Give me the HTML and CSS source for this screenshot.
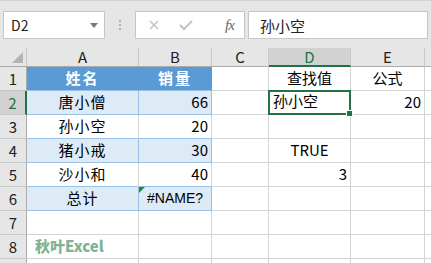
FILE: index.html
```html
<!DOCTYPE html>
<html lang="zh-CN">
<head>
<meta charset="UTF-8">
<title>查找值</title>
<link rel="stylesheet" href="styles.css">
</head>
<body>

<!-- Formula bar -->
<div class="formula-bar">
  <div class="name-box">
    <span>D2</span>
    <span class="caret"></span>
  </div>
  <div class="grip"><i></i><i></i><i></i></div>
  <div class="fx-buttons">
    <svg class="btn-icon" width="14" height="14" viewBox="0 0 14 14"><path d="M3 3 L11 11 M11 3 L3 11" stroke="#c4c4c4" stroke-width="1.6" fill="none"/></svg>
    <svg class="btn-icon" width="16" height="14" viewBox="0 0 16 14"><path d="M2 7 L6 11 L14 3" stroke="#c4c4c4" stroke-width="2" fill="none"/></svg>
    <span class="fx">fx</span>
  </div>
  <div class="formula-input">孙小空</div>
</div>

<!-- Sheet -->
<div class="sheet">
  <div class="corner"><span class="corner-tri"></span></div>
  <div class="col-head">A</div>
  <div class="col-head">B</div>
  <div class="col-head">C</div>
  <div class="col-head active">D</div>
  <div class="col-head">E</div>
  <div class="col-head"></div>

  <div class="row-head">1</div>
  <div class="cell th center">姓名</div>
  <div class="cell th center">销量</div>
  <div class="cell"></div>
  <div class="cell center">查找值</div>
  <div class="cell center">公式</div>
  <div class="cell"></div>

  <div class="row-head active">2</div>
  <div class="cell band center">唐小僧</div>
  <div class="cell band right">66</div>
  <div class="cell"></div>
  <div class="cell selected">孙小空<span class="fill-handle"></span></div>
  <div class="cell right">20</div>
  <div class="cell"></div>

  <div class="row-head">3</div>
  <div class="cell plain center">孙小空</div>
  <div class="cell plain right">20</div>
  <div class="cell"></div>
  <div class="cell"></div>
  <div class="cell"></div>
  <div class="cell"></div>

  <div class="row-head">4</div>
  <div class="cell band center">猪小戒</div>
  <div class="cell band right">30</div>
  <div class="cell"></div>
  <div class="cell center">TRUE</div>
  <div class="cell"></div>
  <div class="cell"></div>

  <div class="row-head">5</div>
  <div class="cell plain center">沙小和</div>
  <div class="cell plain right">40</div>
  <div class="cell"></div>
  <div class="cell right">3</div>
  <div class="cell"></div>
  <div class="cell"></div>

  <div class="row-head">6</div>
  <div class="cell band center">总计</div>
  <div class="cell band center err">#NAME?<span class="err-mark"></span></div>
  <div class="cell"></div>
  <div class="cell"></div>
  <div class="cell"></div>
  <div class="cell"></div>

  <div class="row-head">7</div>
  <div class="cell"></div>
  <div class="cell"></div>
  <div class="cell"></div>
  <div class="cell"></div>
  <div class="cell"></div>
  <div class="cell"></div>

  <div class="row-head">8</div>
  <div class="cell"><span class="watermark">秋叶Excel</span></div>
  <div class="cell"></div>
  <div class="cell"></div>
  <div class="cell"></div>
  <div class="cell"></div>
  <div class="cell"></div>

  <div class="row-head"></div>
  <div class="cell"></div>
  <div class="cell"></div>
  <div class="cell"></div>
  <div class="cell"></div>
  <div class="cell"></div>
  <div class="cell"></div>
</div>

</body>
</html>
```

FILE: styles.css
```css
* { margin: 0; padding: 0; box-sizing: border-box; }
html, body { width: 431px; height: 263px; overflow: hidden; }
body { font-family: "Noto Sans CJK SC", "Liberation Sans", sans-serif; background-color: #fff; color: #000; font-size: 14px; }

/* formula bar */
.formula-bar { height: 48px; background-color: #e6e6e6; border-top: 1px solid #d4d4d4; display: flex; align-items: flex-start; padding-top: 10px; padding-left: 3px; }
.name-box { width: 102px; height: 28px; background-color: #fff; border: 1px solid #c6c6c6; display: flex; align-items: center; justify-content: space-between; padding: 0 6px 0 7px; font-size: 14px; color: #222; }
.caret { width: 0; height: 0; border-left: 4px solid transparent; border-right: 4px solid transparent; border-top: 5px solid #777; }
.grip { width: 30px; height: 28px; display: flex; flex-direction: column; align-items: center; justify-content: center; gap: 2px; }
.grip i { display: block; width: 2px; height: 2px; background-color: #b0b0b0; }
.fx-buttons { width: 110px; height: 28px; background-color: #fff; border: 1px solid #c6c6c6; display: flex; align-items: center; padding-left: 11px; gap: 17px; }
.fx-buttons .btn-icon { display: block; }
.fx { font-family: "Liberation Serif", serif; font-style: italic; color: #666; font-size: 15px; margin-left: 14px; letter-spacing: -1px; }
.formula-input { width: 180px; height: 28px; margin-left: 3px; background-color: #fff; border: 1px solid #c6c6c6; padding-left: 11px; display: flex; align-items: center; font-size: 15px; color: #222; }

/* sheet grid */
.sheet { display: grid; grid-template-columns: 27px 112px 73px 57px 82px 74px 20px; grid-template-rows: 19px repeat(9, 24px); background-color: #fff; }
.corner { background-color: #e6e6e6; border-right: 1px solid #c8c8c8; border-bottom: 1px solid #ababab; position: relative; }
.corner-tri { position: absolute; right: 3px; bottom: 3px; width: 0; height: 0; border-left: 11px solid transparent; border-bottom: 11px solid #b4b4b4; }
.col-head { background-color: #e6e6e6; border-right: 1px solid #c8c8c8; border-bottom: 1px solid #ababab; text-align: center; font-size: 15px; line-height: 18px; color: #222; }
.col-head.active { background-color: #d2d2d2; border-bottom: 2px solid #217346; color: #217346; }
.row-head { background-color: #e6e6e6; border-right: 1px solid #ababab; border-bottom: 1px solid #c8c8c8; display: flex; align-items: flex-end; justify-content: center; padding-bottom: 1px; font-size: 15px; color: #222; }
.row-head.active { background-color: #d2d2d2; border-right: 2px solid #217346; color: #217346; }

.cell { border-right: 1px solid #d4d4d4; border-bottom: 1px solid #d4d4d4; display: flex; align-items: flex-end; padding: 0 3px 2px; font-size: 15px; line-height: 20px; white-space: nowrap; position: relative; }
.center { justify-content: center; }
.right { justify-content: flex-end; }
.th { background-color: #5b9bd5; color: #fff; font-weight: bold; letter-spacing: 2px; border-right-color: #5b9bd5; border-bottom-color: #9bc2e6; }
.band { background-color: #ddebf7; border-right-color: #9bc2e6; border-bottom-color: #9bc2e6; letter-spacing: 1px; }
.plain { background-color: #fff; border-right-color: #d4d4d4; border-bottom-color: #9bc2e6; letter-spacing: 1px; }
.band.right, .plain.right { letter-spacing: 0; }
.err { font-family: "Liberation Sans", sans-serif; font-size: 14px; letter-spacing: 0; }
.err-mark { position: absolute; left: 0; top: 0; width: 0; height: 0; border-top: 6px solid #1e8a3a; border-right: 6px solid transparent; }

.selected { border: 2px solid #217346; margin: -1px 0 0 -1px; padding-left: 3px; z-index: 2; }
.fill-handle { position: absolute; right: -4px; bottom: -4px; width: 7px; height: 7px; background-color: #217346; border: 1px solid #fff; }

.watermark { font-family: "Noto Sans CJK SC", sans-serif; font-weight: 900; color: #7fb393; font-size: 15px; margin-left: 5px; }
```
